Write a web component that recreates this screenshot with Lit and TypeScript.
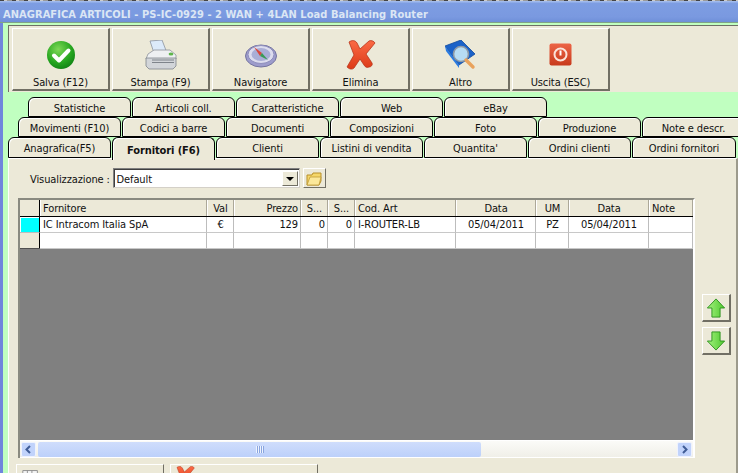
import { LitElement, html, css, svg } from "lit";
import { customElement } from "lit/decorators.js";

const icons: Record<string, any> = {
  ok: svg`<svg width="30" height="30" viewBox="0 0 30 30"><defs><radialGradient id="g1" cx=".4" cy=".3" r=".8"><stop offset="0" stop-color="#7ed957"/><stop offset=".6" stop-color="#25a51f"/><stop offset="1" stop-color="#0c7a12"/></radialGradient></defs><circle cx="15" cy="15" r="14" fill="url(#g1)"/><path d="M8 15.5l5 5 9.5-10" fill="none" stroke="#fff" stroke-width="4" stroke-linecap="round" stroke-linejoin="round"/></svg>`,
  print: svg`<svg width="34" height="30" viewBox="0 0 34 30"><path d="M6 1l12-1 5 13H10z" fill="#dceafa" stroke="#8b93a0" stroke-width=".8"/><path d="M4 14l6-4h16l6 5v4H2z" fill="#eef0f2" stroke="#8e939a" stroke-width=".8"/><path d="M2 18h30v8l-3 3H5l-3-3z" fill="#d2d5d9" stroke="#7f848b" stroke-width=".8"/><path d="M8 20h22M8 22.5h22" stroke="#7f848b" stroke-width="1"/><ellipse cx="27" cy="14" rx="2.4" ry="1.5" fill="#5fb54a"/></svg>`,
  compass: svg`<svg width="32" height="26" viewBox="0 0 32 26"><ellipse cx="16" cy="14" rx="15.5" ry="11" fill="#9d9ccc" stroke="#74749f"/><ellipse cx="16" cy="12.5" rx="13" ry="9" fill="#dcdcee" stroke="#8f8fbd"/><ellipse cx="16" cy="12.5" rx="9.5" ry="6.5" fill="#a9aed6"/><path d="M9 5l8 6-2 3z" fill="#d9483c"/><path d="M23 18l-8-4 2-3z" fill="#3a9a57"/></svg>`,
  del: svg`<svg width="30" height="30" viewBox="0 0 30 30"><defs><linearGradient id="g2" x1="0" y1="0" x2="0" y2="1"><stop offset="0" stop-color="#fb6a45"/><stop offset="1" stop-color="#dc3a17"/></linearGradient></defs><path d="M3 2c3-2 6-2 8 1l3 6 9-8c2-1 5 0 6 2l-9 11 6 9c1 2-1 4-3 4-2 1-4 0-5-2l-4-6-6 9c-2 2-5 1-7-1l7-12z" fill="url(#g2)" stroke="#b8361c" stroke-width=".8"/></svg>`,
  book: svg`<svg width="32" height="30" viewBox="0 0 32 30"><path d="M0 6L16 0l14 14-16 11z" fill="#1b62c8" stroke="#114a9c" stroke-width=".8"/><path d="M0 6l14 19v3L1 11z" fill="#2b7be0"/><circle cx="16" cy="14" r="7.5" fill="#b6dcf4" stroke="#8d99a6" stroke-width="1.6"/><path d="M21 20l7 7" stroke="#e9a25c" stroke-width="3.4" stroke-linecap="round"/></svg>`,
  power: svg`<svg width="24" height="24" viewBox="0 0 24 24"><defs><linearGradient id="g3" x1="0" y1="0" x2="0" y2="1"><stop offset="0" stop-color="#ec6446"/><stop offset="1" stop-color="#c83a1c"/></linearGradient></defs><rect x=".5" y=".5" width="22" height="22" rx="2" fill="url(#g3)"/><circle cx="11.5" cy="11.5" r="6" fill="none" stroke="#fbe3da" stroke-width="2"/><path d="M11.5 7.5v5" stroke="#fff" stroke-width="2"/></svg>`,
};

const tools = [
  ["Salva (F12)", "ok"],
  ["Stampa (F9)", "print"],
  ["Navigatore", "compass"],
  ["Elimina", "del"],
  ["Altro", "book"],
  ["Uscita (ESC)", "power"],
];

const tabRows = [
  { cls: "r3", tabs: ["Statistiche", "Articoli coll.", "Caratteristiche", "Web", "eBay"] },
  { cls: "r2", tabs: ["Movimenti (F10)", "Codici a barre", "Documenti", "Composizioni", "Foto", "Produzione", "Note e descr."] },
  { cls: "r1", tabs: ["Anagrafica(F5)", "Fornitori (F6)", "Clienti", "Listini di vendita", "Quantita'", "Ordini clienti", "Ordini fornitori"] },
];

const cols: [string, number, string, string, string][] = [
  ["Fornitore", 167, "l", "IC Intracom Italia SpA", ""],
  ["Val", 27, "c", "€", ""],
  ["Prezzo", 67, "r", "129", ""],
  ["S...", 27, "c", "0", "r"],
  ["S...", 27, "c", "0", "r"],
  ["Cod. Art", 101, "l", "I-ROUTER-LB", ""],
  ["Data", 80, "c", "05/04/2011", ""],
  ["UM", 33, "c", "PZ", ""],
  ["Data", 80, "c", "05/04/2011", ""],
  ["Note", 44, "l", "", ""],
];

@customElement("app-root")
export class AppRoot extends LitElement {
  static styles = css`
    :host { display: block; width: 738px; height: 473px; overflow: hidden; font: 11px "DejaVu Sans Condensed", "DejaVu Sans", sans-serif; letter-spacing: -0.1px; color: #111; background: #c0ffc0; }
    .shell { display: flex; flex-direction: column; height: 473px; }
    .frag { height: 1px; background: repeating-linear-gradient(90deg, #444 0 4px, #ccc 4px 7px, #999 7px 12px); }
    .title { height: 22px; box-sizing: border-box; padding: 2px 0 0 3px; background: linear-gradient(180deg, #a9c1f0 0, #7d9de2 12%, #7a99e0 75%, #6f90d8 100%); color: #dbe6f4; font: bold 11px/23px "DejaVu Sans Condensed", sans-serif; letter-spacing: 0.06px; white-space: nowrap; border-bottom: 1px solid #7fa487; }
    .client { flex: 1; min-height: 0; display: flex; flex-direction: column; padding: 2px 0 0 5px; border-left: 3px solid #6f86dc; }
    .toolbar { height: 67px; box-sizing: border-box; display: flex; gap: 2px; padding: 2px 0 0 3px; background: #ece9d8; border-top: 1px solid #6f6f66; border-left: 1px solid #6f6f66; }
    .tool { width: 98px; height: 63px; box-sizing: border-box; display: flex; flex-direction: column; align-items: center; background: #ece9d8; border: 1px solid #fff; border-right: 2px solid #716f64; border-bottom: 2px solid #716f64; }
    .tool .ic { height: 39px; margin-top: 6px; display: flex; align-items: center; justify-content: center; }
    .tool .lb { margin-top: 2px; }
    .tabs { display: flex; flex-direction: column; margin-top: 5px; }
    .row { display: flex; height: 20px; gap: 0; }
    .r3 { padding-left: 20px; }
    .r2 { padding-left: 10px; }
    .r1 { padding-left: 0; height: 21px; }
    .tab { flex: 0 0 103px; margin-right: 1px; box-sizing: border-box; padding-top: 2px; text-align: center; background: #ece9d8; border: 1px solid #000; border-radius: 6px 6px 0 0; box-shadow: inset 1px 1px 0 #fff; line-height: 18px; white-space: nowrap; }
    .r1 .tab:last-child { flex-basis: 104px; }
    .tab.active { font-weight: bold; border-bottom: 0; position: relative; z-index: 2; height: 23px; line-height: 22px; }
    .page { flex: 1; min-height: 0; background: #ece9d8; border-top: 1px solid #fff; border-left: 1px solid #fff; border-right: 2px solid #9c9a8c; padding: 9px 0 0 9px; display: flex; flex-direction: column; }
    .filter { display: flex; align-items: center; height: 20px; padding-left: 12px; }
    .filter .lbl { width: 82.5px; padding-top: 2px; white-space: nowrap; }
    .combo { width: 187px; height: 20px; box-sizing: border-box; display: flex; background: #fff; border: 1px solid; border-color: #808080 #d4d0c8 #d4d0c8 #808080; box-shadow: inset 1px 1px 0 #404040; padding: 2px 1px 1px 3px; align-items: center; justify-content: space-between; }
    .combo span { padding-top: 2px; }
    .drop { width: 16px; height: 15px; box-sizing: border-box; background: #ece9d8; border: 1px solid; border-color: #fff #716f64 #716f64 #fff; display: flex; align-items: center; justify-content: center; }
    .drop i { width: 0; height: 0; border: 4px solid transparent; border-top: 4px solid #000; border-bottom: 0; }
    .folder { width: 23px; height: 20px; margin-left: 3px; box-sizing: border-box; border: 1px solid; border-color: #fff #716f64 #716f64 #fff; display: flex; align-items: center; justify-content: center; }
    .main { display: flex; margin-top: 10px; }
    .grid { width: 677px; height: 260px; box-sizing: border-box; display: flex; flex-direction: column; background: #808080; border: 2px solid; border-color: #8a8a80 #fff #fff #8a8a80; border-bottom: 0; }
    .gr { display: flex; background: #fff; }
    .gr.h { height: 16px; background: #ece9d8; border-bottom: 1px solid #000; }
    .gr.d { height: 16px; }
    .gr.d.last { border-bottom: 1px solid #505050; height: 15px; box-sizing: content-box; }
    .sel { width: 20px; flex: none; box-sizing: border-box; border-right: 1px solid #000; background: #ece9d8; }
    .sel.on { background: #00ffff; border-bottom: 1px solid #bdbdbd; box-shadow: inset 1px 1px 0 #fff; }
    .c { box-sizing: border-box; flex: none; padding: 0 2px 0 3px; white-space: nowrap; overflow: hidden; border-right: 1px solid #bdbdbd; border-bottom: 1px solid #c8c8c8; line-height: 15px; height: 16px; }
    .h .c { border-bottom: 0; border-right: 1px solid #aca899; box-shadow: inset 1px 0 0 #fff; line-height: 17px; }
    .l { text-align: left; } .c.cc { text-align: center; } .c.rr { text-align: right; }
    .gray { flex: 1; background: #808080; }
    .sb { height: 16px; display: flex; align-items: center; gap: 2px; background: linear-gradient(180deg, #fbfbf8, #f0efe8); padding: 0 1px; border-top: 1px solid #fff; border-bottom: 1px solid #fff; }
    .sbtn { width: 15px; height: 15px; flex: none; box-sizing: border-box; border-radius: 2px; background: #c1d3fb; border: 1px solid #eef2fe; display: flex; align-items: center; justify-content: center; }
    .thumb { width: 443px; height: 15px; flex: none; background: linear-gradient(180deg, #cfddfc, #bcd0fa); display: flex; align-items: center; justify-content: center; border-radius: 2px; }
    .grip { width: 8px; height: 7px; background: repeating-linear-gradient(90deg, #eef4ff 0 1px, #8aa5df 1px 2px); }
    .spacer { flex: 1; }
    .side { display: flex; flex-direction: column; gap: 5px; margin: 96px 0 0 7px; }
    .sq { width: 29px; height: 28px; box-sizing: border-box; border: 1px solid; border-color: #fff #716f64 #716f64 #fff; border-right-width: 2px; border-bottom-width: 2px; display: flex; align-items: center; justify-content: center; }
    .sq svg { width: 20px; height: 20px; }
    .bottom { display: flex; gap: 6px; margin: 6px 0 0 -2px; }
    .bb { width: 148px; height: 30px; box-sizing: border-box; border: 1px solid; border-color: #fff #716f64 #716f64 #fff; padding: 1px 0 0 4px; }
    .bb svg { width: 20px; height: 20px; }
  `;

  render() {
    const up = svg`<svg width="22" height="22" viewBox="0 0 22 22"><defs><linearGradient id="ga" x1="0" y1="0" x2="1" y2="0"><stop offset="0" stop-color="#a4f27e"/><stop offset="1" stop-color="#4ec82e"/></linearGradient></defs><path d="M11 1l9.5 10H15.5v10h-9V11H1.5z" fill="url(#ga)" stroke="#2a8f1c"/></svg>`;
    const down = svg`<svg width="22" height="22" viewBox="0 0 22 22"><path d="M11 21L1.5 11H6.5V1h9v10h5z" fill="url(#ga)" stroke="#2a8f1c"/></svg>`;
    return html`<div class="shell">
      <div class="frag"></div>
      <div class="title">ANAGRAFICA ARTICOLI - PS-IC-0929 - 2 WAN + 4LAN Load Balancing Router</div>
      <div class="client">
        <div class="toolbar">
          ${tools.map(([t, i]) => html`<div class="tool"><div class="ic">${icons[i]}</div><div class="lb">${t}</div></div>`)}
        </div>
        <div class="tabs">
          ${tabRows.map(r => html`<div class="row ${r.cls}">${r.tabs.map(t => html`<div class="tab ${t === "Fornitori (F6)" ? "active" : ""}">${t}</div>`)}</div>`)}
        </div>
        <div class="page">
          <div class="filter">
            <div class="lbl">Visualizzazione :</div>
            <div class="combo"><span>Default</span><div class="drop"><i></i></div></div>
            <div class="folder"><svg width="16" height="15" viewBox="0 0 16 15"><path d="M1 4h5l1-2h8v8l-2 4H1z" fill="#f5d76a" stroke="#b8902a"/><path d="M1 14l3-8h11l-2 8z" fill="#fbe89a" stroke="#b8902a" stroke-width=".7"/></svg></div>
          </div>
          <div class="main">
            <div class="grid">
              <div class="gr h"><div class="sel"></div>${cols.map(c => html`<div class="c ${c[2] === "c" ? "cc" : c[2] === "r" ? "rr" : "l"}" style="width:${c[1]}px">${c[0]}</div>`)}</div>
              <div class="gr d"><div class="sel on"></div>${cols.map(c => html`<div class="c ${c[4] === "r" || c[2] === "r" ? "rr" : c[2] === "c" ? "cc" : "l"}" style="width:${c[1]}px">${c[3]}</div>`)}</div>
              <div class="gr d last"><div class="sel"></div>${cols.map(c => html`<div class="c" style="width:${c[1]}px"></div>`)}</div>
              <div class="gray"></div>
              <div class="sb">
                <div class="sbtn"><svg width="9" height="9" viewBox="0 0 9 9"><path d="M6 1L2.5 4.5 6 8" fill="none" stroke="#3f5c96" stroke-width="2"/></svg></div>
                <div class="thumb"><div class="grip"></div></div>
                <div class="spacer"></div>
                <div class="sbtn"><svg width="9" height="9" viewBox="0 0 9 9"><path d="M3 1l3.5 3.5L3 8" fill="none" stroke="#3f5c96" stroke-width="2"/></svg></div>
              </div>
            </div>
            <div class="side"><div class="sq">${up}</div><div class="sq">${down}</div></div>
          </div>
          <div class="bottom">
            <div class="bb"><svg width="22" height="18" viewBox="0 0 22 18"><path d="M2 3h16v12H2z" fill="#f4f4f4" stroke="#8b8b8b"/><path d="M7 3v12M12 3v12M2 7h16" stroke="#8b8b8b"/></svg></div>
            <div class="bb">${icons.del}</div>
          </div>
        </div>
      </div>
    </div>`;
  }
}
